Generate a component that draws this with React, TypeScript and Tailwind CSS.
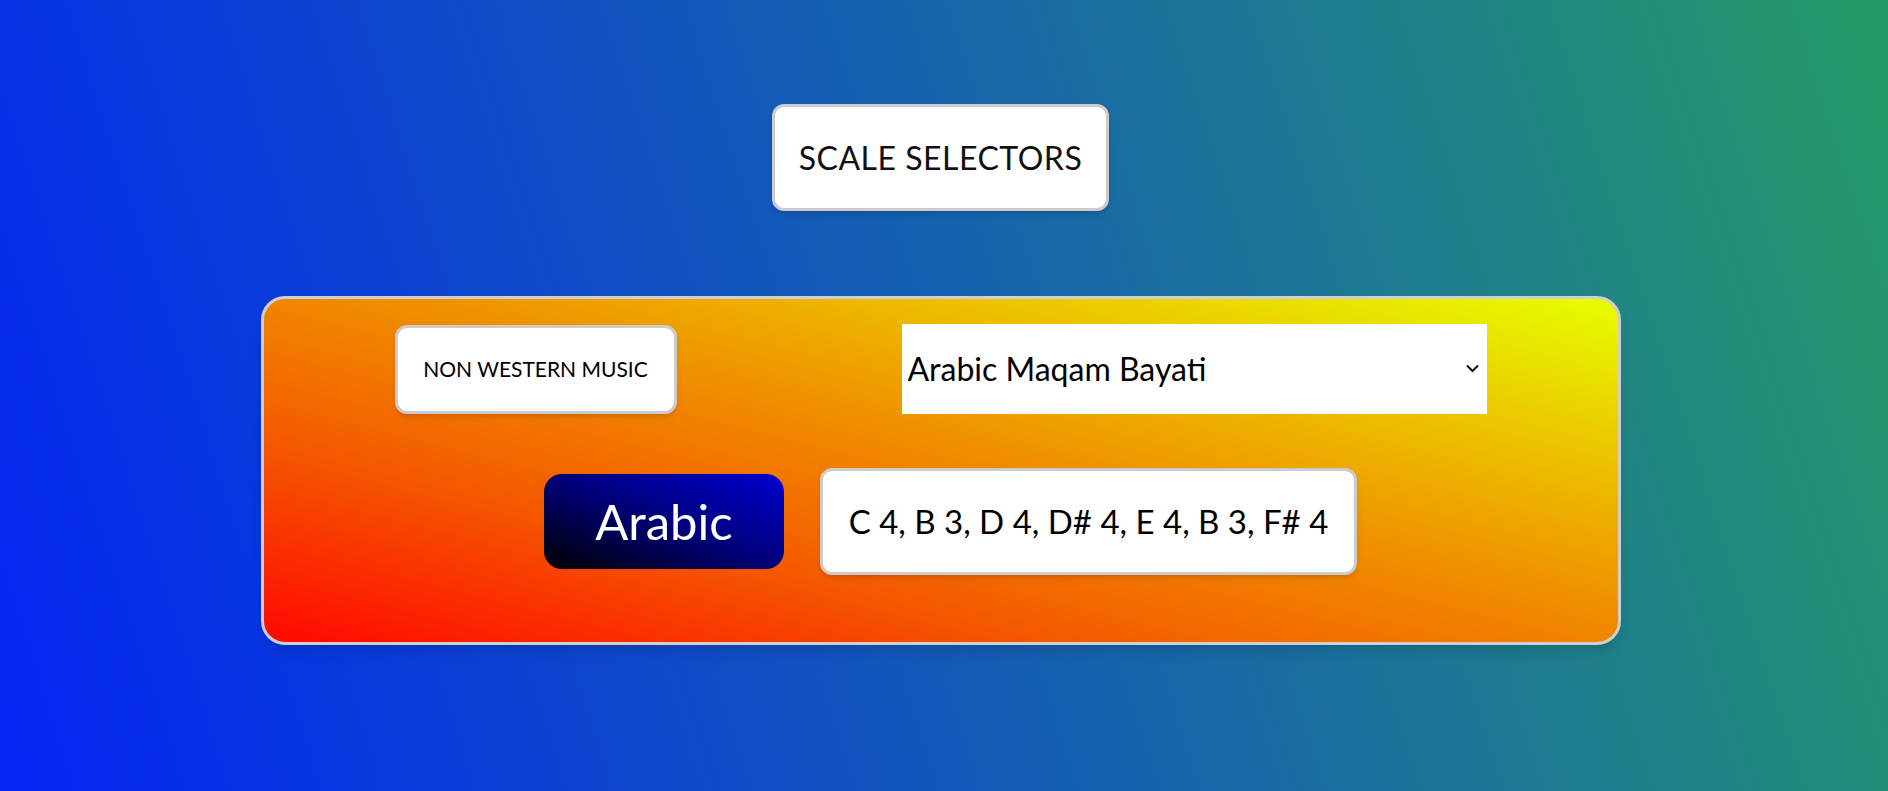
import { useState } from "react";

const SCALES: Record<string, { region: string; notes: string }> = {
  "Arabic Maqam Bayati": { region: "Arabic", notes: "C 4, B 3, D 4, D# 4, E 4, B 3, F# 4" },
  "Arabic Maqam Rast": { region: "Arabic", notes: "C 4, D 4, E 4, F 4, G 4, A 4, B 4" },
  "Indian Raga Bhairav": { region: "Indian", notes: "C 4, C# 4, E 4, F 4, G 4, G# 4, B 4" },
};

export default function App() {
  const [scale, setScale] = useState("Arabic Maqam Bayati");
  const current = SCALES[scale];

  return (
    <div
      className="flex min-h-[791px] w-full flex-col items-center bg-[linear-gradient(72deg,#0325f5_0%,#1152c0_40%,#1d7a92_72%,#269a66_100%)] pr-[7px] pt-[104px]"
      style={{ fontFamily: "Lato, 'Noto Sans', sans-serif" }}
    >
      <div className="flex h-[107px] w-[337px] items-center justify-center rounded-[12px] border-[3px] border-[#cccccc] bg-white text-[32px] tracking-[0.5px] text-[#111] shadow-md">
        SCALE SELECTORS
      </div>

      <div className="mt-[85px] flex h-[349px] w-[1360px] flex-col rounded-[24px] border-[3px] border-[#cfcfcf] bg-[linear-gradient(to_top_right,#ff0800_0%,#f45a00_30%,#f09000_55%,#eccc00_80%,#e6ff00_100%)] shadow-lg">
        <div className="flex items-center justify-between px-[131px] pt-[25px]">
          <button className="flex h-[89px] w-[282px] items-center justify-center rounded-[12px] border-[3px] border-[#cccccc] bg-white text-[21px] text-black shadow-md">
            NON WESTERN MUSIC
          </button>
          <div className="relative h-[90px] w-[585px] bg-white">
            <select
              value={scale}
              onChange={(e) => setScale(e.target.value)}
              className="h-full w-full appearance-none rounded-none border-0 bg-white pl-[6px] pr-[30px] text-[32px] text-black outline-none"
              style={{ fontFamily: "Lato, 'Noto Sans', sans-serif" }}
            >
              {Object.keys(SCALES).map((s) => (
                <option key={s} value={s}>
                  {s}
                </option>
              ))}
            </select>
            <svg
              className="pointer-events-none absolute right-[8px] top-[40px]"
              width="13"
              height="9"
              viewBox="0 0 13 9"
              fill="none"
            >
              <path d="M1 1.5 L6.5 7 L12 1.5" stroke="#111" strokeWidth="2" />
            </svg>
          </div>
        </div>

        <div className="ml-[20px] mt-[54px] flex items-center justify-center gap-[36px]">
          <div className="flex h-[95px] w-[240px] items-center justify-center rounded-[18px] bg-[linear-gradient(to_top_right,#000000_0%,#00007a_50%,#0000d2_100%)] text-[49px] text-white">
            {current.region}
          </div>
          <div className="flex h-[107px] w-[537px] items-center justify-center rounded-[12px] border-[3px] border-[#cccccc] bg-white text-[33px] text-black shadow-md">
            {current.notes}
          </div>
        </div>
      </div>
    </div>
  );
}
